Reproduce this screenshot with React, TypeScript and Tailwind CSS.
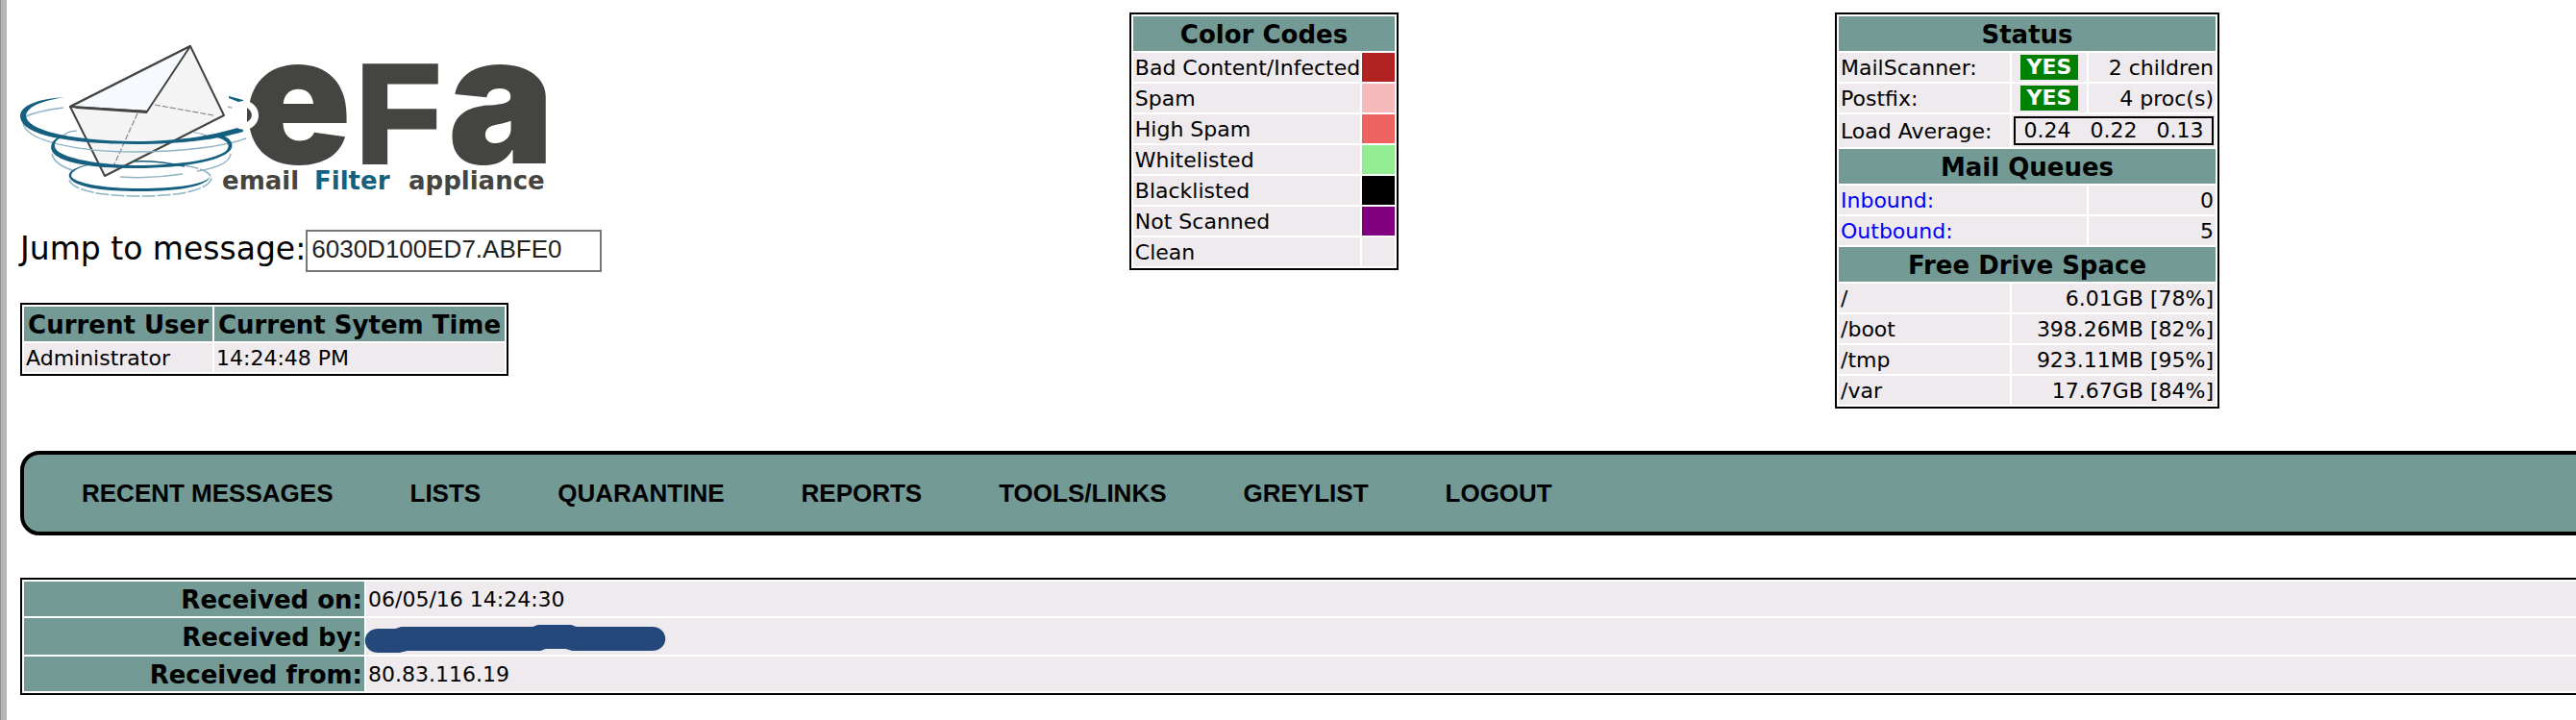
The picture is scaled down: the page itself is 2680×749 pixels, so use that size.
import { useState } from "react";

const colorCodes = [
  { label: "Bad Content/Infected", swatch: "bg-[#b22222]" },
  { label: "Spam", swatch: "bg-[#f6babd]" },
  { label: "High Spam", swatch: "bg-[#ee6262]" },
  { label: "Whitelisted", swatch: "bg-[#93ee93]" },
  { label: "Blacklisted", swatch: "bg-black" },
  { label: "Not Scanned", swatch: "bg-[#800080]" },
  { label: "Clean", swatch: "bg-[#eeeaee]" },
];

const services = [
  { name: "MailScanner:", detail: "2 children" },
  { name: "Postfix:", detail: "4 proc(s)" },
];

const queues = [
  { name: "Inbound:", count: 0 },
  { name: "Outbound:", count: 5 },
];

const drives = [
  { mount: "/", free: "6.01GB [78%]" },
  { mount: "/boot", free: "398.26MB [82%]" },
  { mount: "/tmp", free: "923.11MB [95%]" },
  { mount: "/var", free: "17.67GB [84%]" },
];

const menu = ["RECENT MESSAGES", "LISTS", "QUARANTINE", "REPORTS", "TOOLS/LINKS", "GREYLIST", "LOGOUT"];

const tableClass =
  "border-2 border-black border-separate border-spacing-[2px] whitespace-nowrap text-[22px] leading-7";
const headClass = "bg-[#739a95] px-[2px] pt-[2px] text-center font-bold text-[26px] leading-[34px]";
const cellClass = "bg-[#eeeaee] pl-[2px] pt-[2px]";
const rightCellClass = "bg-[#eeeaee] pr-[2px] pt-[2px] text-right";
const labelClass = "bg-[#739a95] px-[2px] pt-[2px] text-right font-bold text-[26px] leading-[34px]";

function Logo() {
  return (
    <svg
      viewBox="21 13 560 216"
      className="h-[216px] w-[560px] overflow-visible"
      role="img"
      aria-label="eFa email Filter appliance"
    >
      {/* Envelope */}
      <path d="M73 111L198 48L233 120L109 183Z" fill="#f5f4f5" stroke="#444541" strokeWidth="2" strokeLinejoin="round" />
      <path d="M73 111L198 48L153 116Z" fill="#f6f9fe" stroke="#444541" strokeWidth="2" strokeLinejoin="round" />
      <path d="M73 110L154 115L153 118L80 113Z" fill="#444541" />
      <path d="M161 109L222 120M143 118L118 173" fill="none" stroke="#8a8a8a" strokeWidth="1.2" strokeDasharray="6 2" />

      {/* Pale rings */}
      <g fill="none" stroke="#8fb3c6" strokeWidth="1.5">
        <path d="M27 121C36 117 50 114 66 112" />
        <path d="M237 111L254 116" />
        <path d="M24 128C27 147 82 158 140 158C190 158 235 152 256 144" />
        <path d="M54 160C56 170 68 175 78 178" />
        <path d="M125 184C140 185 165 185 190 181M205 178C224 175 239 170 240 160" />
        <path d="M72 187C76 199 108 204 146 204C186 204 216 198 220 186C220 179 206 174 190 172" strokeDasharray="14 2" />
      </g>

      {/* Blue rings */}
      <g fill="#155f80">
        <path d="M67 101C38 103 21 110 21 121C22 136 50 149 140 150C190 150 226 145 253 137V131C226 140 190 147 140 147C70 146 27 135 27 120C29 110 44 105 67 101Z" />
        <path d="M238 100L253 104V108L238 102Z" />
        <path d="M64 141C53 145 52 153 54 157C60 169 94 175 140 175C196 175 236 166 241 154C243 149 239 144 232 141L226 143C239 147 239 152 236 156C228 165 190 172 140 172C95 171 60 163 57 153C56 147 60 144 68 142Z" />
        <path d="M92 171C74 175 71 180 72 184C76 195 108 199 146 199C186 199 214 194 219 184C212 192 184 196 146 196C106 196 76 190 74 183C74 178 82 174 92 172Z" />
      </g>
      <g fill="none" stroke="#155f80">
        <path d="M140 168C160 167 178 170 192 173" strokeWidth="1.6" />
        <path d="M64 143C68 138 72 136 80 136M202 138C210 138 215 141 220 144" strokeWidth="1.2" opacity="0.6" />
      </g>

      <g fill="#444541" className="font-['Inter'] font-black">
        <text x="253" y="170" fontSize="186">e</text>
        <text x="370" y="169" fontSize="145" stroke="#444541" strokeWidth="5" className="font-['Liberation_Sans'] font-bold">F</text>
        <text x="466" y="170" fontSize="186">a</text>
      </g>
      {/* Ring cutting into the e */}
      <circle cx="254" cy="120" r="15" fill="#fff" />
      <path d="M257 112C263 116 264 123 257 127Z" fill="#444541" />

      <g fill="#444541" fontSize="26" className="font-['DejaVu_Sans'] font-bold">
        <text x="231" y="197">email</text>
        <text x="327" y="197" fill="#155f80">Filter</text>
        <text x="425" y="197">appliance</text>
      </g>
    </svg>
  );
}

function StatusTable() {
  return (
    <table className={`${tableClass} justify-self-center`}>
      <colgroup>
        <col className="w-[178px]" />
        <col className="w-[78px]" />
        <col className="w-[132px]" />
      </colgroup>
      <tbody>
        <tr>
          <th colSpan={3} className={headClass}>Status</th>
        </tr>
        {services.map((s) => (
          <tr key={s.name}>
            <td className={cellClass}>{s.name}</td>
            <td className="bg-[#eeeaee]">
              <div className="mx-auto w-15 bg-[#008000] text-center font-bold leading-[26px] text-white">YES</div>
            </td>
            <td className={rightCellClass}>{s.detail}</td>
          </tr>
        ))}
        <tr>
          <td className={cellClass}>Load Average:</td>
          <td colSpan={2} className="bg-[#eeeaee] p-[2px]">
            <div className="flex justify-center gap-5 border-2 border-black leading-[26px]">
              <span>0.24</span>
              <span>0.22</span>
              <span>0.13</span>
            </div>
          </td>
        </tr>
        <tr>
          <th colSpan={3} className={headClass}>Mail Queues</th>
        </tr>
        {queues.map((q) => (
          <tr key={q.name}>
            <td colSpan={2} className={cellClass}>
              <a href="#" className="text-[#0000ff]">{q.name}</a>
            </td>
            <td className={rightCellClass}>{q.count}</td>
          </tr>
        ))}
        <tr>
          <th colSpan={3} className={headClass}>Free Drive Space</th>
        </tr>
        {drives.map((d) => (
          <tr key={d.mount}>
            <td className={cellClass}>{d.mount}</td>
            <td colSpan={2} className={rightCellClass}>{d.free}</td>
          </tr>
        ))}
      </tbody>
    </table>
  );
}

export default function App() {
  const [message, setMessage] = useState("6030D100ED7.ABFE0");

  return (
    <div className="min-h-screen overflow-hidden border-l border-[#8f8f8f] bg-white font-['DejaVu_Sans',Verdana,sans-serif] text-black">
      <div className="min-h-screen border-l-6 border-[#b5b5b5] pl-[14px] pt-[13px]">
        <div className="grid grid-cols-[897fr_794fr_794fr_174fr] items-start">
          <div>
            <Logo />
            <form className="mt-[10px] flex items-center" onSubmit={(e) => e.preventDefault()}>
              <label htmlFor="message" className="text-[33px] leading-10 pb-1">Jump to message:</label>
              <input
                id="message"
                type="text"
                value={message}
                onChange={(e) => setMessage(e.target.value)}
                className="h-[44px] w-[308px] border-2 border-[#767676] px-1 pb-1 font-['Liberation_Sans',Arial,sans-serif] text-[26px] text-[#222]"
              />
            </form>
            <table className={`${tableClass} mt-8`}>
              <thead>
                <tr>
                  <th className={`${headClass} w-[196px]`}>Current User</th>
                  <th className={`${headClass} w-[302px]`}>Current Sytem Time</th>
                </tr>
              </thead>
              <tbody>
                <tr>
                  <td className={cellClass}>Administrator</td>
                  <td className={cellClass}>14:24:48 PM</td>
                </tr>
              </tbody>
            </table>
          </div>

          <table className={`${tableClass} justify-self-center`}>
            <tbody>
              <tr>
                <th colSpan={2} className={headClass}>Color Codes</th>
              </tr>
              {colorCodes.map((c) => (
                <tr key={c.label}>
                  <td className={cellClass}>{c.label}</td>
                  <td className={`${c.swatch} w-[34px]`} />
                </tr>
              ))}
            </tbody>
          </table>

          <StatusTable />
        </div>

        <nav className="mt-11 -mr-8 flex h-[88px] items-center gap-20 rounded-[20px] border-4 border-black bg-[#739a95] pl-15 font-['Liberation_Sans',Arial,sans-serif] text-[26px] font-bold">
          {menu.map((item) => (
            <a key={item} href="#">{item}</a>
          ))}
        </nav>

        <div className="mt-11 -mr-8">
          <table className={`${tableClass} w-full`}>
            <tbody>
              <tr>
                <th className={`${labelClass} w-[354px]`}>Received on:</th>
                <td className={cellClass}>06/05/16 14:24:30</td>
              </tr>
              <tr className="h-[38px]">
                <th className={labelClass}>Received by:</th>
                <td className="bg-[#eeeaee] pt-1">
                  <svg viewBox="379 650 314 30" className="-ml-[2px] h-[30px] w-[314px]" aria-hidden="true">
                    <path
                      d="M394 655H409C415 655 413 653 420 653H552C558 653 556 651 562 651H592C598 651 596 653 602 653H678C697 653 697 678 678 678H598C592 678 592 676 586 676H570C564 676 566 678 560 678H426C420 678 420 680 412 680H394C375 680 375 655 394 655Z"
                      fill="#24487a"
                    />
                  </svg>
                </td>
              </tr>
              <tr>
                <th className={labelClass}>Received from:</th>
                <td className={cellClass}>80.83.116.19</td>
              </tr>
            </tbody>
          </table>
        </div>
      </div>
    </div>
  );
}
